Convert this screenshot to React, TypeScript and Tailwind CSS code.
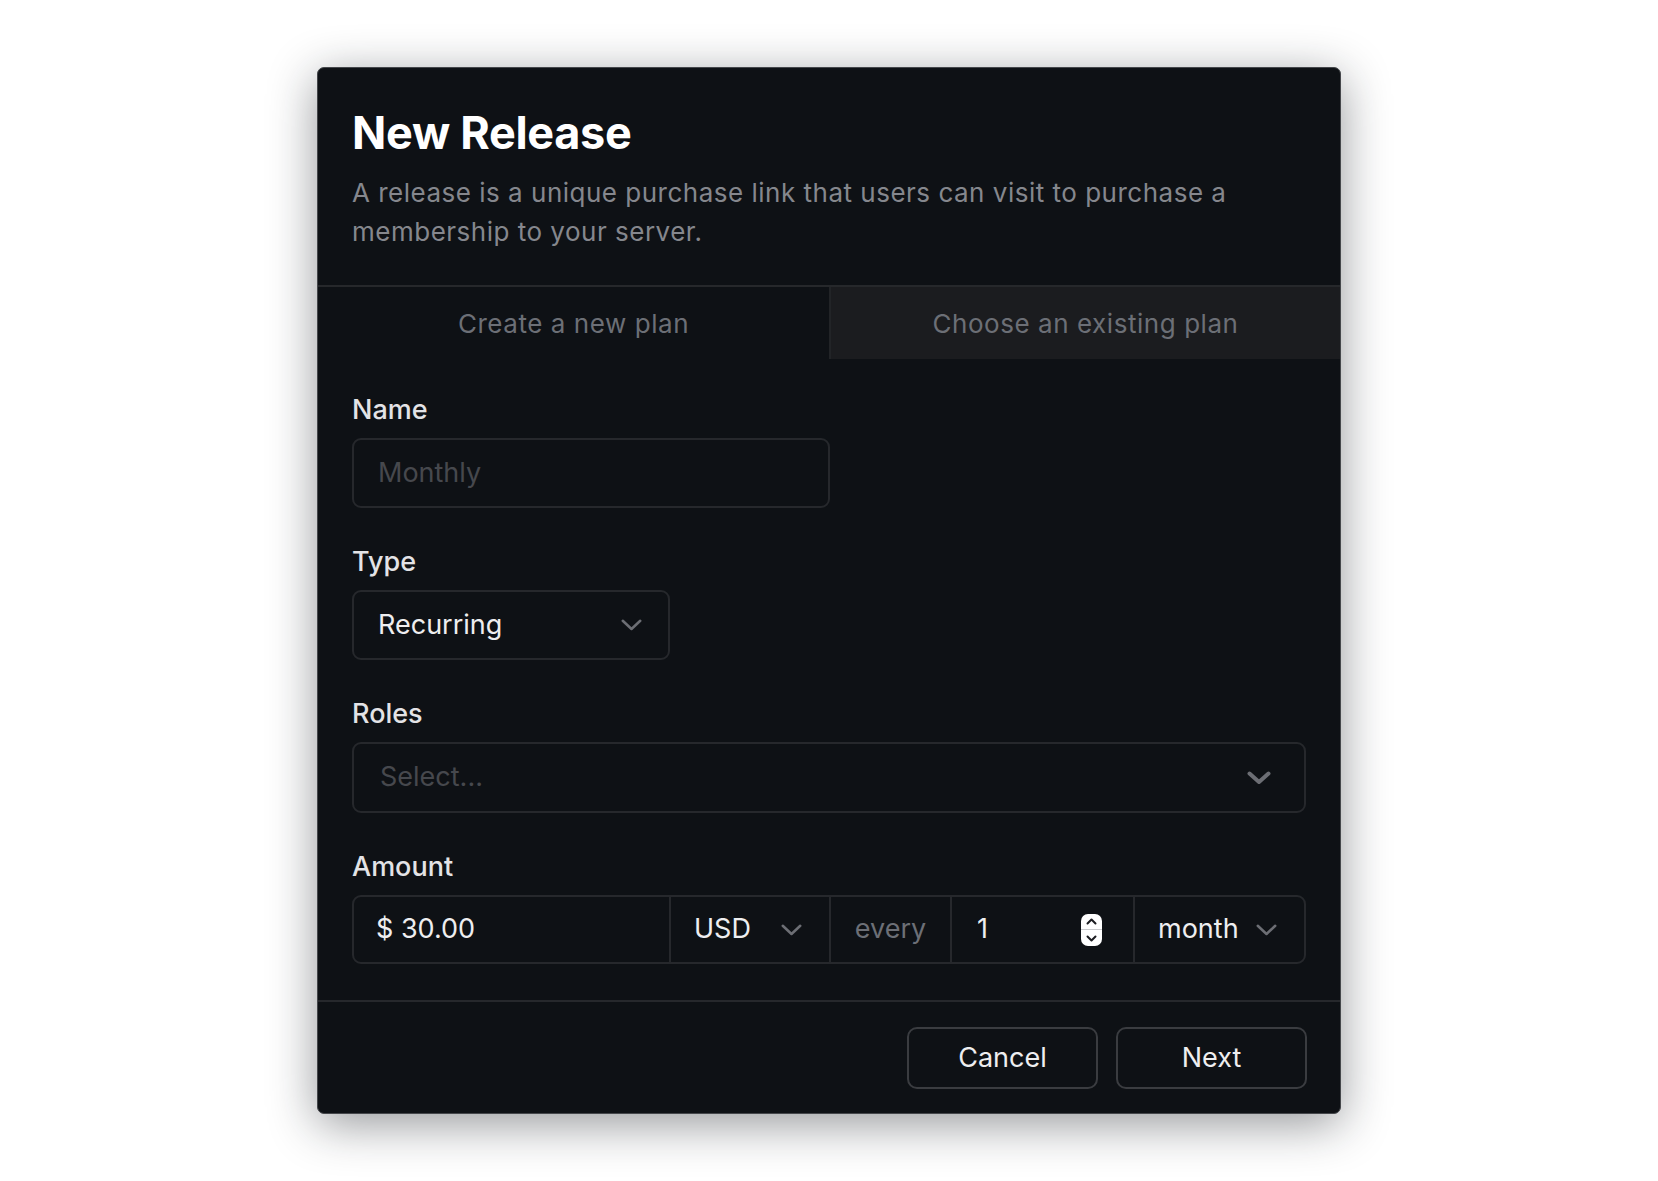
import { useState } from "react";

const font = { fontFamily: "Inter, 'Noto Sans', sans-serif" };

function Chevron({ thick = false }: { thick?: boolean }) {
  if (thick) {
    return (
      <svg width="24" height="14" viewBox="0 0 24 14" fill="none">
        <path d="M2.5 2.5 L12 11 L21.5 2.5" stroke="#6c6e74" strokeWidth="4" strokeLinecap="round" strokeLinejoin="round" />
      </svg>
    );
  }
  return (
    <svg width="21" height="12" viewBox="0 0 21 12" fill="none">
      <path d="M1.75 1.75 L10.5 10 L19.25 1.75" stroke="#6c6e74" strokeWidth="2.5" strokeLinecap="round" strokeLinejoin="round" />
    </svg>
  );
}

function Spinner() {
  return (
    <div className="flex h-[32px] w-[21px] flex-col items-center justify-between rounded-[7px] bg-white py-[4px]">
      <svg width="11" height="7" viewBox="0 0 11 7" fill="none">
        <path d="M1.5 5.5 L5.5 1.5 L9.5 5.5" stroke="#1c1d21" strokeWidth="2" strokeLinecap="round" strokeLinejoin="round" />
      </svg>
      <div className="h-px w-full bg-[#c9cacd]" />
      <svg width="11" height="7" viewBox="0 0 11 7" fill="none">
        <path d="M1.5 1.5 L5.5 5.5 L9.5 1.5" stroke="#1c1d21" strokeWidth="2" strokeLinecap="round" strokeLinejoin="round" />
      </svg>
    </div>
  );
}

function Label({ children }: { children: React.ReactNode }) {
  return <div className="h-[32px] text-[27px] font-medium leading-[32px] text-[#e3e3e6]">{children}</div>;
}

export default function App() {
  const [tab, setTab] = useState(0);

  return (
    <div className="flex min-h-screen justify-center bg-white pt-[67px]" style={font}>
      <div className="flex h-[1047px] w-[1024px] flex-col overflow-hidden rounded-[7px] border border-[#45474b] bg-[#0e1115] shadow-[0_10px_48px_rgba(20,24,30,0.45)]">
        {/* Header */}
        <div className="px-[34px] pb-[34px] pt-[37px]">
          <h1 className="text-[45px] font-bold leading-[56px] tracking-[-0.3px] text-white">New Release</h1>
          <p className="mt-[12px] text-[26px] leading-[39px] tracking-[0.5px] text-[#85878d]">
            A release is a unique purchase link that users can visit to purchase a membership to your server.
          </p>
        </div>

        {/* Tabs */}
        <div className="grid h-[74px] grid-cols-2 border-t-2 border-[#26282b]">
          <button
            onClick={() => setTab(0)}
            className={`text-[26px] tracking-[0.55px] text-[#6c6f76] ${tab === 0 ? "bg-[#0e1115]" : "bg-[#1b1c1f]"}`}
          >
            Create a new plan
          </button>
          <button
            onClick={() => setTab(1)}
            className={`border-l-2 border-[#222427] text-[26px] tracking-[0.55px] text-[#6c6f76] ${tab === 1 ? "bg-[#0e1115]" : "bg-[#1b1c1f]"}`}
          >
            Choose an existing plan
          </button>
        </div>

        {/* Form */}
        <div className="flex flex-1 flex-col gap-[38px] px-[34px] pt-[35px]">
          <div className="flex flex-col gap-[12px]">
            <Label>Name</Label>
            <div className="flex h-[70px] w-[478px] items-center rounded-[9px] border-2 border-[#26282c] px-[24px] text-[27px] text-[#46484d]">
              Monthly
            </div>
          </div>

          <div className="flex flex-col gap-[12px]">
            <Label>Type</Label>
            <div className="flex h-[70px] w-[318px] items-center justify-between rounded-[9px] border-2 border-[#26282c] pl-[24px] pr-[26px] text-[27px] text-[#eeeef0]">
              <span>Recurring</span>
              <Chevron />
            </div>
          </div>

          <div className="flex flex-col gap-[12px]">
            <Label>Roles</Label>
            <div className="flex h-[71px] w-full items-center justify-between rounded-[9px] border-2 border-[#26282c] pl-[26px] pr-[33px] text-[27px] text-[#46484d]">
              <span>Select...</span>
              <Chevron thick />
            </div>
          </div>

          <div className="flex flex-col gap-[12px]">
            <Label>Amount</Label>
            <div className="flex h-[69px] w-full items-stretch rounded-[9px] border-2 border-[#26282c] text-[27px] text-[#eeeef0]">
              <div className="flex w-[315px] items-center pl-[22px]">$ 30.00</div>
              <div className="flex w-[160px] items-center justify-between border-l-2 border-[#26282c] pl-[23px] pr-[27px]">
                <span>USD</span>
                <Chevron />
              </div>
              <div className="flex w-[121px] items-center justify-center border-l-2 border-[#26282c] text-[#6c6f76]">every</div>
              <div className="flex w-[183px] items-center justify-between border-l-2 border-[#26282c] pl-[25px] pr-[31px]">
                <span>1</span>
                <Spinner />
              </div>
              <div className="flex flex-1 items-center justify-between border-l-2 border-[#26282c] pl-[23px] pr-[27px]">
                <span>month</span>
                <Chevron />
              </div>
            </div>
          </div>
        </div>

        {/* Footer */}
        <div className="flex justify-end gap-[18px] border-t-2 border-[#26282c] px-[33px] pb-[24px] pt-[25px]">
          <button className="h-[62px] w-[191px] rounded-[10px] border-2 border-[#3a3c40] text-[27px] text-[#eeeef0]">Cancel</button>
          <button className="h-[62px] w-[191px] rounded-[10px] border-2 border-[#3a3c40] text-[27px] text-[#eeeef0]">Next</button>
        </div>
      </div>
    </div>
  );
}
